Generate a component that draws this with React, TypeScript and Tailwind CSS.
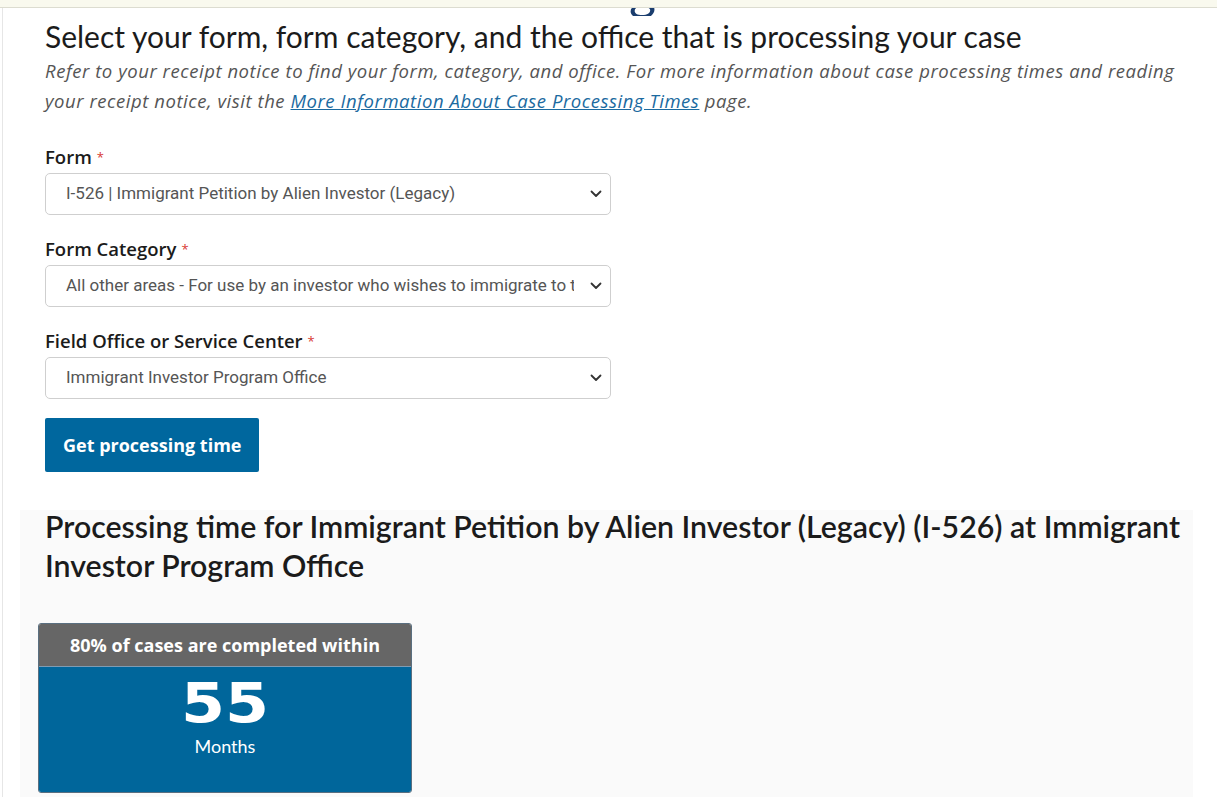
import React from "react";

const Chevron = () => (
  <svg width="12" height="8" viewBox="0 0 12 8" className="shrink-0">
    <path d="M1.5 1.5 L6 6 L10.5 1.5" fill="none" stroke="#333" strokeWidth="1.8" strokeLinecap="round" strokeLinejoin="round" />
  </svg>
);

const roboto = { fontFamily: '"Roboto", "Liberation Sans", sans-serif' };
const openSans = { fontFamily: '"Open Sans", "Liberation Sans", sans-serif' };

const Field = ({ label, value }: { label: string; value: string }) => (
  <div className="flex flex-col">
    <div className="text-[18.5px] leading-[24px] font-semibold text-[#1b1b1b]" style={openSans}>
      {label}
      <span className="text-[#d83933] text-[13px] align-top ml-[5px] font-normal">*</span>
    </div>
    <div className="mt-[4px] w-[566px] h-[42px] border border-[#cfcfcf] rounded-[5px] bg-white flex items-center pl-[20px] pr-[6px]">
      <div className="flex-1 overflow-hidden whitespace-nowrap text-[17px] text-[#555]" style={roboto}>
        {value}
      </div>
      <div className="w-[30px] flex justify-end pr-[2px]">
        <Chevron />
      </div>
    </div>
  </div>
);

export default function App() {
  return (
    <div
      className="relative w-[1217px] h-[797px] overflow-hidden bg-white"
      style={{ fontFamily: '"Lato", "Liberation Sans", sans-serif' }}
    >
      <div className="h-[8px] bg-[#f9f9ee] border-b border-[#dcdcd0]" />
      <div className="absolute left-0 top-[8px] w-[3px] h-full border-r border-[#e6e6e6]" />
      <div className="relative h-0">
        <div className="absolute left-[600px] top-0 h-[8px] w-[80px] overflow-hidden pointer-events-none">
          <span className="absolute left-[29px] top-[-45px] text-[52px] leading-[52px] text-[#1a3d6e] font-normal">
            g
          </span>
        </div>
      </div>

      <div className="pl-[45px] pr-[30px] pt-[10px]">
        <h1 className="text-[30px] leading-[36px] text-[#1b1b1b] font-normal">
          Select your form, form category, and the office that is processing your case
        </h1>
        <p
          className="mt-[2px] italic text-[18.5px] leading-[30px] text-[#555] font-normal tracking-[0.55px] max-w-[1140px]"
          style={openSans}
        >
          Refer to your receipt notice to find your form, category, and office. For more information about case
          processing times and reading your receipt notice, visit the{" "}
          <a className="text-[#1b6aa0] underline">More Information About Case Processing Times</a> page.
        </p>

        <div className="mt-[29px] flex flex-col gap-[22px]">
          <Field label="Form" value="I-526 | Immigrant Petition by Alien Investor (Legacy)" />
          <Field
            label="Form Category"
            value="All other areas - For use by an investor who wishes to immigrate to the United States"
          />
          <Field label="Field Office or Service Center" value="Immigrant Investor Program Office" />
        </div>

        <button
          className="mt-[19px] h-[54px] px-[18px] bg-[#00679e] text-white text-[18px] font-bold rounded-[2px]"
          style={openSans}
        >
          Get processing time
        </button>
      </div>

      <div className="flow-root ml-[20px] mt-[38px] w-[1173px] h-[400px] bg-[#fafafa]">
        <h2 className="pl-[25px] pr-[10px] text-[30.3px] leading-[39px] font-semibold text-[#1b1b1b] -mt-[3px]">
          Processing time for Immigrant Petition by Alien Investor (Legacy) (I-526) at Immigrant Investor Program
          Office
        </h2>
        <div className="ml-[18px] mt-[38px] w-[374px] rounded-[3px] overflow-hidden border border-[#5a6f80]">
          <div
            className="h-[42px] bg-[#666666] flex items-center justify-center text-white text-[18px] font-bold"
            style={openSans}
          >
            80% of cases are completed within
          </div>
          <div className="h-[126px] bg-[#00669b] border-t border-[#7f9cb3] flex flex-col items-center text-white">
            <div
              className="text-[56px] leading-[56px] font-bold mt-[8px] scale-x-[1.13]"
              style={{ fontFamily: '"DejaVu Sans", "Liberation Sans", sans-serif' }}
            >
              55
            </div>
            <div className="text-[18px] leading-[22px] mt-[4px]">Months</div>
          </div>
        </div>
      </div>
    </div>
  );
}
